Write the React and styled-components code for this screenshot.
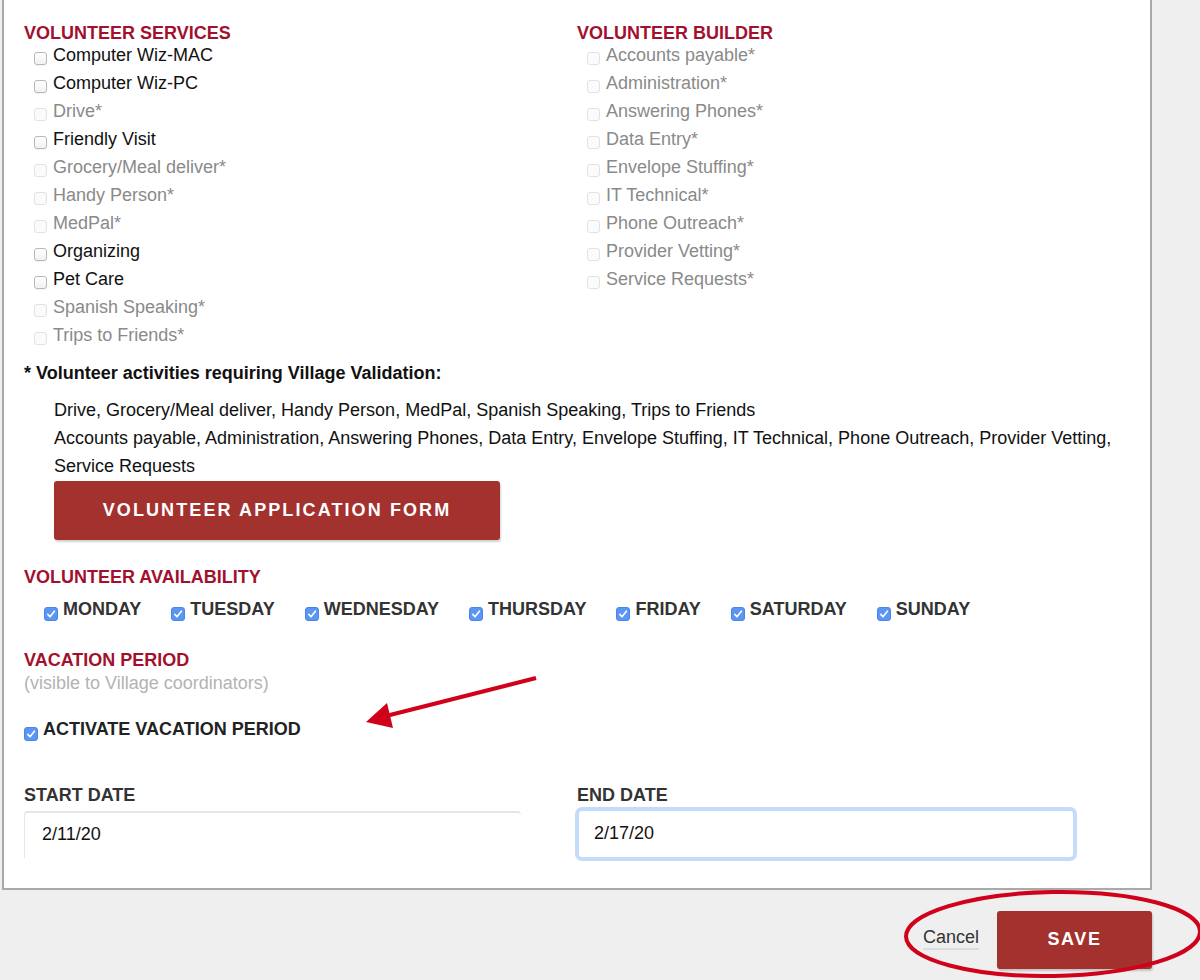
import React from "react";
import styled, { createGlobalStyle } from "styled-components";

const GlobalStyle = createGlobalStyle`
  html, body { margin: 0; padding: 0; }
  body {
    background: #efefef;
    font-family: "Liberation Sans", Arial, Helvetica, sans-serif;
    overflow: hidden;
  }
`;

const Page = styled.div`
  position: relative;
  width: 1200px;
  height: 980px;
  overflow: hidden;
`;

const Panel = styled.div`
  box-sizing: border-box;
  margin-left: 2px;
  width: 1150px;
  background: #fff;
  border: 2px solid #a9a9a9;
  border-top: none;
  padding: 24px 20px 30px 20px;
`;

const TwoCol = styled.div`
  display: grid;
  grid-template-columns: 553px 1fr;
`;

const SectionTitle = styled.div`
  font-size: 18px;
  font-weight: bold;
  line-height: 19px;
  color: #a3102d;
  margin-top: ${(p) => p.$mt || 0}px;
`;

const List = styled.div`
  display: flex;
  flex-direction: column;
  padding-left: 10px;
  margin-top: -2px;
`;

const Row = styled.label`
  display: flex;
  align-items: flex-start;
  height: 28px;
  line-height: 28px;
  font-size: 18px;
  color: ${(p) => (p.$disabled ? "#8a8a8a" : "#111")};
`;

const Box = styled.span`
  box-sizing: border-box;
  flex: none;
  width: 13px;
  height: 13px;
  margin-top: 11px;
  margin-right: 6px;
  border-radius: 3px;
  border: 1px solid ${(p) => (p.$disabled ? "#e2e2e2" : "#b8b8b8")};
  background: ${(p) => (p.$disabled ? "#fbfbfb" : "linear-gradient(#fff, #f2f2f2)")};
  box-shadow: ${(p) => (p.$disabled ? "none" : "0 1px 1px rgba(0,0,0,0.06)")};
`;

const CheckedBox = styled.span`
  box-sizing: border-box;
  flex: none;
  width: 14px;
  height: 14px;
  margin-top: 10px;
  margin-right: 5px;
  border-radius: 3px;
  background: #5b96f4;
  border: 1px solid #4a86ea;
  display: flex;
  align-items: center;
  justify-content: center;
`;

const Note = styled.div`
  margin-top: 14px;
  font-size: 18px;
  font-weight: bold;
  line-height: 20px;
  color: #111;
`;

const ValidList = styled.div`
  margin-top: 13px;
  padding-left: 30px;
  font-size: 18px;
  line-height: 28px;
  color: #111;
`;

const AppButton = styled.button`
  display: block;
  margin: 1px 0 0 30px;
  width: 446px;
  height: 59px;
  border: none;
  border-radius: 3px;
  background: #a3312e;
  color: #fff;
  font-family: "Liberation Sans", Arial, sans-serif;
  font-size: 18px;
  font-weight: bold;
  letter-spacing: 2.1px;
  box-shadow: 1px 2px 2px rgba(0, 0, 0, 0.18);
  cursor: pointer;
`;

const Days = styled.div`
  display: flex;
  margin-top: 9.5px;
  padding-left: 20px;
`;

const Day = styled.label`
  display: flex;
  align-items: flex-start;
  height: 28px;
  line-height: 24px;
  font-size: 18px;
  font-weight: bold;
  color: ${(p) => p.$color || "#333"};
  margin-right: ${(p) => p.$mr ?? 30}px;
  margin-top: ${(p) => p.$mt || 0}px;
`;

const Sub = styled.div`
  margin-top: 2px;
  font-size: 18px;
  line-height: 22px;
  color: #b3b3b3;
`;

const DateGrid = styled.div`
  display: grid;
  grid-template-columns: 553px 1fr;
  margin-top: 40px;
`;

const FieldLabel = styled.div`
  font-size: 18px;
  font-weight: bold;
  line-height: 20px;
  color: #333;
  margin-bottom: 6px;
`;

const StartInput = styled.div`
  box-sizing: border-box;
  width: 497px;
  height: 47px;
  border-top: 2px solid #e6e6e6;
  border-left: 1px solid #e6e6e6;
  border-radius: 4px 4px 0 0;
  padding-left: 17px;
  line-height: 42px;
  font-size: 18px;
  color: #111;
`;

const EndInput = styled.div`
  box-sizing: border-box;
  margin-left: 2px;
  width: 494px;
  height: 46px;
  border-radius: 3px;
  box-shadow: 0 0 0 4px #c5dbfb;
  padding-left: 15px;
  line-height: 45px;
  font-size: 18px;
  color: #111;
`;

const Footer = styled.div`
  width: 1152px;
  display: flex;
  justify-content: flex-end;
  align-items: center;
  gap: 18px;
  margin-top: 21px;
`;

const CancelLink = styled.a`
  font-size: 18px;
  color: #333;
  line-height: 22px;
  border-bottom: 2px solid #dcdcdc;
  margin-bottom: 3px;
  text-decoration: none;
`;

const SaveButton = styled.button`
  width: 155px;
  height: 58px;
  border: none;
  border-radius: 3px;
  background: #a3312e;
  color: #fff;
  font-family: "Liberation Sans", Arial, sans-serif;
  font-size: 18px;
  font-weight: bold;
  letter-spacing: 1.6px;
  box-shadow: 1px 2px 2px rgba(0, 0, 0, 0.18);
`;

const Overlay = styled.svg`
  position: absolute;
  left: 0;
  top: 0;
  pointer-events: none;
`;

const Check = () => (
  <svg width="10" height="10" viewBox="0 0 10 10">
    <path d="M1.8 5.4 L4 7.8 L8.4 2.2" fill="none" stroke="#fff" strokeWidth="1.6" strokeLinecap="round" strokeLinejoin="round" />
  </svg>
);

const services = [
  ["Computer Wiz-MAC", false],
  ["Computer Wiz-PC", false],
  ["Drive*", true],
  ["Friendly Visit", false],
  ["Grocery/Meal deliver*", true],
  ["Handy Person*", true],
  ["MedPal*", true],
  ["Organizing", false],
  ["Pet Care", false],
  ["Spanish Speaking*", true],
  ["Trips to Friends*", true],
];

const builder = [
  "Accounts payable*",
  "Administration*",
  "Answering Phones*",
  "Data Entry*",
  "Envelope Stuffing*",
  "IT Technical*",
  "Phone Outreach*",
  "Provider Vetting*",
  "Service Requests*",
];

const days = ["MONDAY", "TUESDAY", "WEDNESDAY", "THURSDAY", "FRIDAY", "SATURDAY", "SUNDAY"];

export default function App() {
  return (
    <Page>
      <GlobalStyle />
      <Panel>
        <TwoCol>
          <div>
            <SectionTitle>VOLUNTEER SERVICES</SectionTitle>
            <List>
              {services.map(([t, d]) => (
                <Row key={t} $disabled={d}>
                  <Box $disabled={d} />
                  {t}
                </Row>
              ))}
            </List>
          </div>
          <div>
            <SectionTitle>VOLUNTEER BUILDER</SectionTitle>
            <List>
              {builder.map((t) => (
                <Row key={t} $disabled>
                  <Box $disabled />
                  {t}
                </Row>
              ))}
            </List>
          </div>
        </TwoCol>

        <Note>* Volunteer activities requiring Village Validation:</Note>
        <ValidList>
          <div>Drive, Grocery/Meal deliver, Handy Person, MedPal, Spanish Speaking, Trips to Friends</div>
          <div>
            Accounts payable, Administration, Answering Phones, Data Entry, Envelope Stuffing, IT Technical, Phone
            Outreach, Provider Vetting, Service Requests
          </div>
        </ValidList>
        <AppButton>VOLUNTEER APPLICATION FORM</AppButton>

        <SectionTitle $mt={28}>VOLUNTEER AVAILABILITY</SectionTitle>
        <Days>
          {days.map((d) => (
            <Day key={d}>
              <CheckedBox>
                <Check />
              </CheckedBox>
              {d}
            </Day>
          ))}
        </Days>

        <SectionTitle $mt={26}>VACATION PERIOD</SectionTitle>
        <Sub>(visible to Village coordinators)</Sub>
        <Day $mt={23} $mr={0} $color="#222">
          <CheckedBox>
            <Check />
          </CheckedBox>
          ACTIVATE VACATION PERIOD
        </Day>

        <DateGrid>
          <div>
            <FieldLabel>START DATE</FieldLabel>
            <StartInput>2/11/20</StartInput>
          </div>
          <div>
            <FieldLabel>END DATE</FieldLabel>
            <EndInput>2/17/20</EndInput>
          </div>
        </DateGrid>
      </Panel>

      <Footer>
        <CancelLink>Cancel</CancelLink>
        <SaveButton>SAVE</SaveButton>
      </Footer>

      <Overlay width="1200" height="980" viewBox="0 0 1200 980">
        <line x1="536" y1="678" x2="386" y2="716" stroke="#d0021b" strokeWidth="4" />
        <polygon points="366,722 387,703 393,728" fill="#d0021b" />
        <ellipse cx="1053" cy="934" rx="147" ry="42" fill="none" stroke="#d0021b" strokeWidth="4" transform="rotate(-1 1053 934)" />
      </Overlay>
    </Page>
  );
}
